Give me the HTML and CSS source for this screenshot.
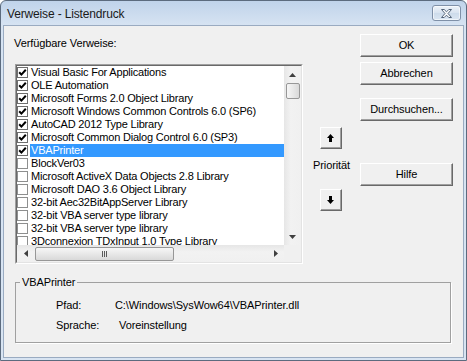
FILE: index.html
```html
<!DOCTYPE html>
<html lang="de">
<head>
<meta charset="utf-8">
<title>Verweise - Listendruck</title>
<link rel="stylesheet" href="styles.css">
</head>
<body>
<div class="window">
  <div class="titlebar">
    <span class="title">Verweise - Listendruck</span>
    <div class="close">
      <svg width="11" height="9" viewBox="0 0 11 9"><polygon points="0.5,0.5 3.2,0.5 5.5,2.8 7.8,0.5 10.5,0.5 7,4.5 10.5,8.5 7.8,8.5 5.5,6.2 3.2,8.5 0.5,8.5 4,4.5" fill="#fafbfc" stroke="#55657a" stroke-width="1" stroke-linejoin="round"/></svg>
    </div>
  </div>
  <div class="client">
    <div class="main">
      <div class="left">
        <div class="lbl">Verfügbare Verweise:</div>
        <div class="listbox">
          <div class="lb-frame">
            <div class="list">
              <div class="item"><span class="cb on"><svg width="9" height="9" viewBox="0 0 9 9"><path d="M1.2 4.2 L3.4 6.6 L7.8 1.8" fill="none" stroke="#000" stroke-width="2"/></svg></span><span class="txt">Visual Basic For Applications</span></div>
              <div class="item"><span class="cb on"><svg width="9" height="9" viewBox="0 0 9 9"><path d="M1.2 4.2 L3.4 6.6 L7.8 1.8" fill="none" stroke="#000" stroke-width="2"/></svg></span><span class="txt">OLE Automation</span></div>
              <div class="item"><span class="cb on"><svg width="9" height="9" viewBox="0 0 9 9"><path d="M1.2 4.2 L3.4 6.6 L7.8 1.8" fill="none" stroke="#000" stroke-width="2"/></svg></span><span class="txt">Microsoft Forms 2.0 Object Library</span></div>
              <div class="item"><span class="cb on"><svg width="9" height="9" viewBox="0 0 9 9"><path d="M1.2 4.2 L3.4 6.6 L7.8 1.8" fill="none" stroke="#000" stroke-width="2"/></svg></span><span class="txt">Microsoft Windows Common Controls 6.0 (SP6)</span></div>
              <div class="item"><span class="cb on"><svg width="9" height="9" viewBox="0 0 9 9"><path d="M1.2 4.2 L3.4 6.6 L7.8 1.8" fill="none" stroke="#000" stroke-width="2"/></svg></span><span class="txt">AutoCAD 2012 Type Library</span></div>
              <div class="item"><span class="cb on"><svg width="9" height="9" viewBox="0 0 9 9"><path d="M1.2 4.2 L3.4 6.6 L7.8 1.8" fill="none" stroke="#000" stroke-width="2"/></svg></span><span class="txt">Microsoft Common Dialog Control 6.0 (SP3)</span></div>
              <div class="item sel"><span class="cb on"><svg width="9" height="9" viewBox="0 0 9 9"><path d="M1.2 4.2 L3.4 6.6 L7.8 1.8" fill="none" stroke="#000" stroke-width="2"/></svg></span><span class="txt">VBAPrinter</span></div>
              <div class="item"><span class="cb"></span><span class="txt">BlockVer03</span></div>
              <div class="item"><span class="cb"></span><span class="txt">Microsoft ActiveX Data Objects 2.8 Library</span></div>
              <div class="item"><span class="cb"></span><span class="txt">Microsoft DAO 3.6 Object Library</span></div>
              <div class="item"><span class="cb"></span><span class="txt">32-bit Aec32BitAppServer Library</span></div>
              <div class="item"><span class="cb"></span><span class="txt">32-bit VBA server type library</span></div>
              <div class="item"><span class="cb"></span><span class="txt">32-bit VBA server type library</span></div>
              <div class="item"><span class="cb"></span><span class="txt">3Dconnexion TDxInput 1.0 Type Library</span></div>
            </div>
            <div class="vscroll">
              <div class="sbtn"><svg width="7" height="4" viewBox="0 0 7 4"><polygon points="0,4 3.5,0 7,4" fill="#3f3f3f"/></svg></div>
              <div class="vthumb"></div>
              <div class="strack"></div>
              <div class="sbtn"><svg width="7" height="4" viewBox="0 0 7 4"><polygon points="0,0 3.5,4 7,0" fill="#3f3f3f"/></svg></div>
            </div>
            <div class="hscroll">
              <div class="sbtn"><svg width="4" height="7" viewBox="0 0 4 7"><polygon points="4,0 0,3.5 4,7" fill="#3f3f3f"/></svg></div>
              <div class="hthumb"><span class="grip"></span></div>
              <div class="strack"></div>
              <div class="sbtn"><svg width="4" height="7" viewBox="0 0 4 7"><polygon points="0,0 4,3.5 0,7" fill="#3f3f3f"/></svg></div>
            </div>
            <div class="corner"></div>
          </div>
        </div>
      </div>
      <div class="prio">
        <div class="btn arrow"><svg width="7" height="8" viewBox="0 0 7 8"><path d="M3.5 0 L7 4 H5 V8 H2 V4 H0 Z" fill="#000"/></svg></div>
        <div class="prio-lbl">Priorität</div>
        <div class="btn arrow down"><svg width="7" height="8" viewBox="0 0 7 8"><path d="M3.5 8 L7 4 H5 V0 H2 V4 H0 Z" fill="#000"/></svg></div>
      </div>
      <div class="buttons">
        <div class="btn">OK</div>
        <div class="btn b2">Abbrechen</div>
        <div class="btn b3">Durchsuchen...</div>
        <div class="btn b4">Hilfe</div>
      </div>
    </div>
    <fieldset class="group">
      <legend>VBAPrinter</legend>
      <div class="info">
        <span>Pfad:</span><span>C:\Windows\SysWow64\VBAPrinter.dll</span>
        <span>Sprache:</span><span class="lang">Voreinstellung</span>
      </div>
    </fieldset>
  </div>
</div>
</body>
</html>
```
FILE: styles.css
```css
html, body {
  margin: 0;
  padding: 0;
}
body {
  width: 467px;
  height: 361px;
  overflow: hidden;
  font-family: "Liberation Sans", Arial, sans-serif;
  font-size: 11px;
  letter-spacing: -0.1px;
  color: #000;
  background: #fff;
}
.window {
  width: 467px;
  height: 361px;
  box-sizing: border-box;
  border: 1px solid #5c6b7e;
  border-radius: 6px 6px 0 0;
  padding: 0 2px 2px 2px;
  background: linear-gradient(to bottom, #c0d3ea 0px, #d6e3f2 24px, #d8e4f2 100%);
  display: flex;
  flex-direction: column;
}
.titlebar {
  height: 24px;
  display: flex;
  justify-content: space-between;
  align-items: flex-start;
  flex: none;
}
.title {
  font-size: 12px;
  letter-spacing: -0.15px;
  padding-left: 4px;
  padding-top: 6px;
  color: #1a1a1a;
}
.close {
  width: 27px;
  height: 14px;
  margin-top: 4px;
  margin-right: 3px;
  border: 1px solid #7f90a8;
  border-radius: 3px;
  background: linear-gradient(to bottom, #eef3f9, #d8e3f0 50%, #cddbeb 51%, #dbe6f2);
  box-shadow: inset 0 0 0 1px rgba(255,255,255,0.6);
  display: flex;
  align-items: center;
  justify-content: center;
}
.client {
  flex: 1;
  background: #f0f0f0;
  border: 1px solid #9aabc1;
  padding: 8px 10px 0 11px;
  display: flex;
  flex-direction: column;
}
.main {
  display: flex;
}
.left {
  width: 288px;
  flex: none;
}
.lbl {
  line-height: 13px;
  margin-top: 3px;
  margin-left: -1px;
}
.listbox {
  margin-top: 14px;
  border: 1px solid;
  border-color: #a0a0a0 #ffffff #ffffff #a0a0a0;
}
.lb-frame {
  border: 1px solid;
  border-color: #696969 #e3e3e3 #e3e3e3 #696969;
  height: 196px;
  background: #fff;
  display: grid;
  grid-template-columns: 1fr 17px;
  grid-template-rows: 1fr 17px;
}
.list {
  overflow: hidden;
  min-height: 0;
}
.item {
  height: 13px;
  display: flex;
  align-items: center;
  white-space: nowrap;
  letter-spacing: -0.2px;
}
.cb {
  width: 9px;
  height: 9px;
  border: 1px solid #8e8f8f;
  background: #fff;
  flex: none;
  display: flex;
}
.cb.on {
  border-color: #6e6e6e;
}
.txt {
  flex: 1;
  margin-left: 2px;
  padding-left: 1px;
  line-height: 13px;
  height: 13px;
}
.sel .txt {
  background: #3399ff;
  color: #fff;
}
.vscroll {
  display: flex;
  flex-direction: column;
  background: linear-gradient(to right, #e6e6e6, #f2f2f2 40%, #f0f0f0);
}
.hscroll {
  display: flex;
  background: linear-gradient(to bottom, #e6e6e6, #f2f2f2 40%, #f0f0f0);
}
.sbtn {
  width: 17px;
  height: 17px;
  flex: none;
  display: flex;
  align-items: center;
  justify-content: center;
}
.strack {
  flex: 1;
}
.vthumb {
  height: 14px;
  margin: 0 1px 0 2px;
  border: 1px solid #979797;
  border-radius: 2px;
  background: linear-gradient(to right, #f6f6f6, #e8e8e8 50%, #d9d9d9);
  flex: none;
}
.hthumb {
  width: 137px;
  margin: 2px 0 1px 1px;
  border: 1px solid #979797;
  border-radius: 2px;
  background: linear-gradient(to bottom, #f6f6f6, #e8e8e8 50%, #d9d9d9);
  flex: none;
  display: flex;
  align-items: center;
  justify-content: center;
}
.grip {
  width: 5px;
  height: 6px;
  background: repeating-linear-gradient(to right, #5a5a5a 0 1px, transparent 1px 2px);
}
.corner {
  background: #f0f0f0;
}
.prio {
  flex: 1;
  display: flex;
  flex-direction: column;
  align-items: center;
}
.btn {
  box-sizing: border-box;
  width: 93px;
  height: 23px;
  background: #f0f0f0;
  border: 1px solid;
  border-color: #ffffff #696969 #696969 #ffffff;
  box-shadow: inset -1px -1px 0 #a0a0a0;
  display: flex;
  align-items: center;
  justify-content: center;
  line-height: 13px;
}
.btn.arrow {
  width: 22px;
  height: 22px;
  margin-top: 93px;
  margin-right: 1px;
  padding: 0 1px 1px 0;
}
.btn.arrow.down {
  margin-top: 17px;
}
.prio-lbl {
  margin-top: 10px;
  line-height: 13px;
}
.buttons {
  width: 93px;
  flex: none;
  display: flex;
  flex-direction: column;
}
.b2 { margin-top: 5px; }
.b3 { margin-top: 13px; }
.b4 { margin-top: 42px; }
.group {
  margin: 12px 2px 0 0;
  padding: 0;
  min-inline-size: 0;
  height: 67px;
  box-sizing: border-box;
  border: 1px solid #a0a0a0;
  box-shadow: 1px 1px 0 #ffffff;
}
.group legend {
  margin-left: 4px;
  padding: 0 2px;
  line-height: 13px;
}
.info {
  display: grid;
  grid-template-columns: 59px auto;
  row-gap: 7px;
  padding: 10px 0 0 40px;
  line-height: 13px;
}
.lang {
  padding-left: 4px;
}
```
